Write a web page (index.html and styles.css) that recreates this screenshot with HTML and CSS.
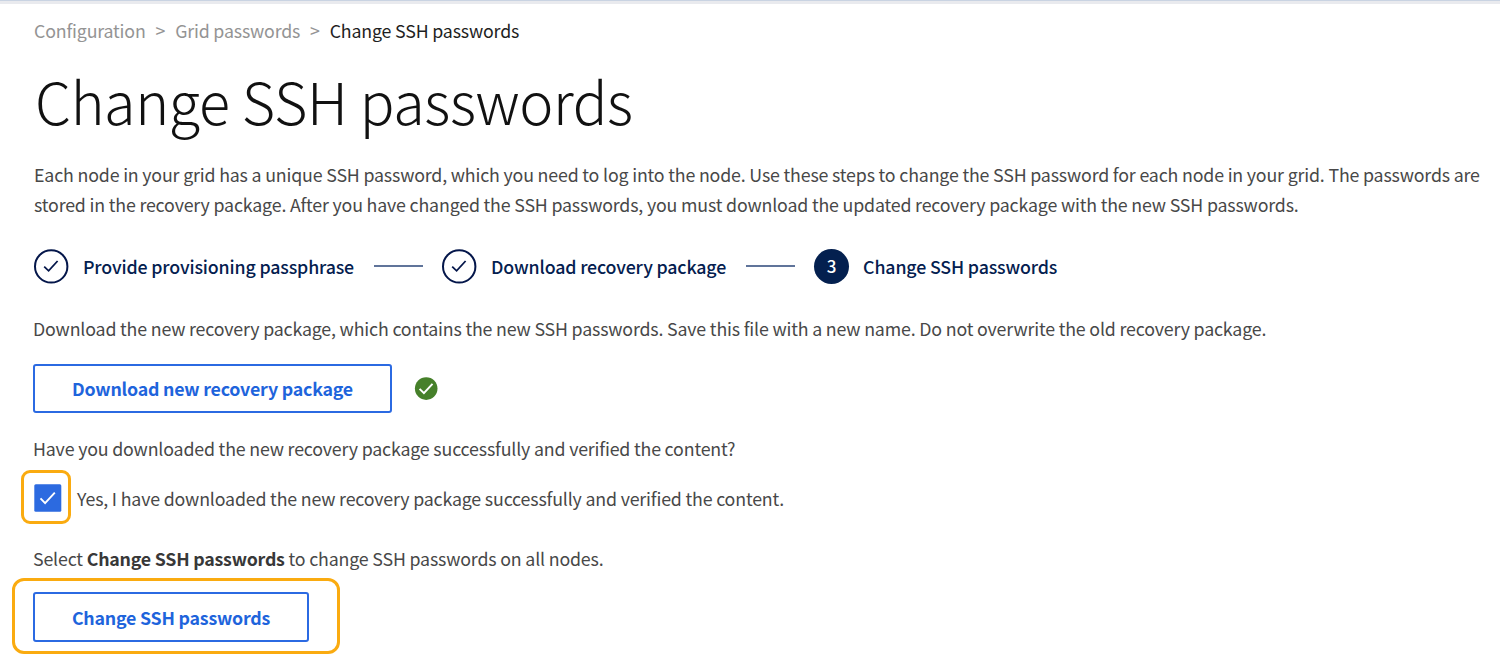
FILE: index.html
```html
<!DOCTYPE html>
<html lang="en">
<head>
<meta charset="utf-8">
<title>Change SSH passwords</title>
<link rel="stylesheet" href="styles.css">
</head>
<body>
<main class="page">
  <nav class="breadcrumb">
    <span>Configuration</span><span class="sep">&gt;</span><span>Grid passwords</span><span class="sep">&gt;</span><span class="current">Change SSH passwords</span>
  </nav>
  <h1 class="title">Change SSH passwords</h1>
  <p class="intro">Each node in your grid has a unique SSH password, which you need to log into the node. Use these steps to change the SSH password for each node in your grid. The passwords are<br>stored in the recovery package. After you have changed the SSH passwords, you must download the updated recovery package with the new SSH passwords.</p>
  <ol class="steps">
    <li class="step">
      <svg class="mark" viewBox="0 0 36 36"><circle cx="18.2" cy="18.4" r="16.2"/><path d="M11.2 18.6l4.4 4.2 9-9.8"/></svg>
      <span class="label">Provide provisioning passphrase</span>
    </li>
    <li class="rule"></li>
    <li class="step">
      <svg class="mark" viewBox="0 0 36 36"><circle cx="18.2" cy="18.4" r="16.2"/><path d="M11.2 18.6l4.4 4.2 9-9.8"/></svg>
      <span class="label">Download recovery package</span>
    </li>
    <li class="rule"></li>
    <li class="step">
      <span class="number">3</span>
      <span class="label">Change SSH passwords</span>
    </li>
  </ol>
  <div class="panel">
    <p>Download the new recovery package, which contains the new SSH passwords. Save this file with a new name. Do not overwrite the old recovery package.</p>
    <div class="download-row">
      <button class="button download">Download new recovery package</button>
      <svg class="success" viewBox="0 0 24 24"><circle cx="12.2" cy="11.6" r="11.3"/><path d="M5.6 11.9l4.3 4.2 8.6-9.2"/></svg>
    </div>
    <p>Have you downloaded the new recovery package successfully and verified the content?</p>
    <label class="confirm">
      <span class="highlight small"><svg class="checkbox" viewBox="0 0 28 28"><rect x=".3" y=".3" width="27" height="27.4" rx="1.5"/><path d="M6.5 14.3l4.6 4.8 9.7-10.5"/></svg></span>
      <span class="confirm-text">Yes, I have downloaded the new recovery package successfully and verified the content.</span>
    </label>
    <p class="select-note">Select <strong>Change SSH passwords</strong> to change SSH passwords on all nodes.</p>
    <div class="highlight large"><button class="button change">Change SSH passwords</button></div>
  </div>
</main>
</body>
</html>
```

FILE: styles.css
```css
* { box-sizing: border-box; }
body {
  margin: 0;
  background: #fff;
  color: #484848;
  font: 400 17.8px/30px "Noto Sans CJK SC", "Noto Sans", sans-serif;
  letter-spacing: -0.17px;
}
.page {
  height: 654px;
  overflow: hidden;
  border-top: 1px solid #c9d3e2;
  box-shadow: inset 0 3px #e9eaee;
  padding: 14px 0 0 34px;
  white-space: nowrap;
}
p, h1, ol { margin: 0; padding: 0; }
.breadcrumb { display: flex; height: 30px; color: #949494; }
.sep { padding: 0 9.9px; }
.current { color: #1f1f1f; }
.title {
  height: 114px;
  padding: 15px 0 0 1px;
  font-size: 57.5px;
  line-height: 80px;
  font-weight: 200;
  letter-spacing: -0.38px;
  color: #111;
}
.intro { height: 60px; letter-spacing: -0.168px; }
.steps {
  display: flex;
  align-items: center;
  height: 36px;
  margin-top: 29px;
  list-style: none;
  color: #04204f;
  font-weight: 500;
  letter-spacing: -0.15px;
}
.step { display: flex; align-items: center; gap: 14px; }
.step .label { padding-bottom: 1px; }
.mark { width: 36px; height: 36px; margin-left: -1px; fill: none; stroke: #04164a; stroke-width: 2; }
.mark path { stroke-width: 1.8; }
.rule { width: 49px; height: 2px; margin: 0 19px 0 20px; background: #60749a; }
.number {
  width: 35px;
  height: 35px;
  border-radius: 50%;
  background: #04204f;
  color: #fff;
  font-size: 17px;
  line-height: 34px;
  text-align: center;
}
.panel { margin: 29px 0 0 -1px; }
.download-row { display: flex; align-items: center; height: 49px; margin: 21px 0 20px; gap: 22px; }
.button {
  height: 49px;
  padding: 0;
  border: 2px solid #2b6ae2;
  border-radius: 3px;
  background: #fff;
  color: #1e64dc;
  font: 700 17.8px/44px "Noto Sans CJK SC", "Noto Sans", sans-serif;
  letter-spacing: -0.21px;
}
.download { width: 359px; padding-bottom: 1px; line-height: 43px; }
.change { width: 276px; height: 50px; }
.success { width: 24px; height: 24px; fill: #46802a; }
.success path { fill: none; stroke: #fff; stroke-width: 2; }
.confirm { display: flex; align-items: center; height: 54px; margin: 7px 0 0 -12px; gap: 6px; }
.confirm-text { padding-top: 2px; }
.highlight { border: 3px solid #faab10; }
.small { display: flex; align-items: center; justify-content: flex-end; width: 50px; height: 54px; padding: 1px 6px 0 0; border-radius: 9px; }
.checkbox { width: 28px; height: 28px; fill: #2c6ae0; }
.checkbox path { fill: none; stroke: #fff; stroke-width: 1.9; }
.select-note { margin-top: 19px; }
.select-note strong { font-weight: 700; color: #383838; letter-spacing: -0.22px; }
.large { display: flex; align-items: center; width: 328px; height: 76px; margin: 5px 0 0 -21px; padding: 1px 0 0 18px; border-radius: 12px; }
```
